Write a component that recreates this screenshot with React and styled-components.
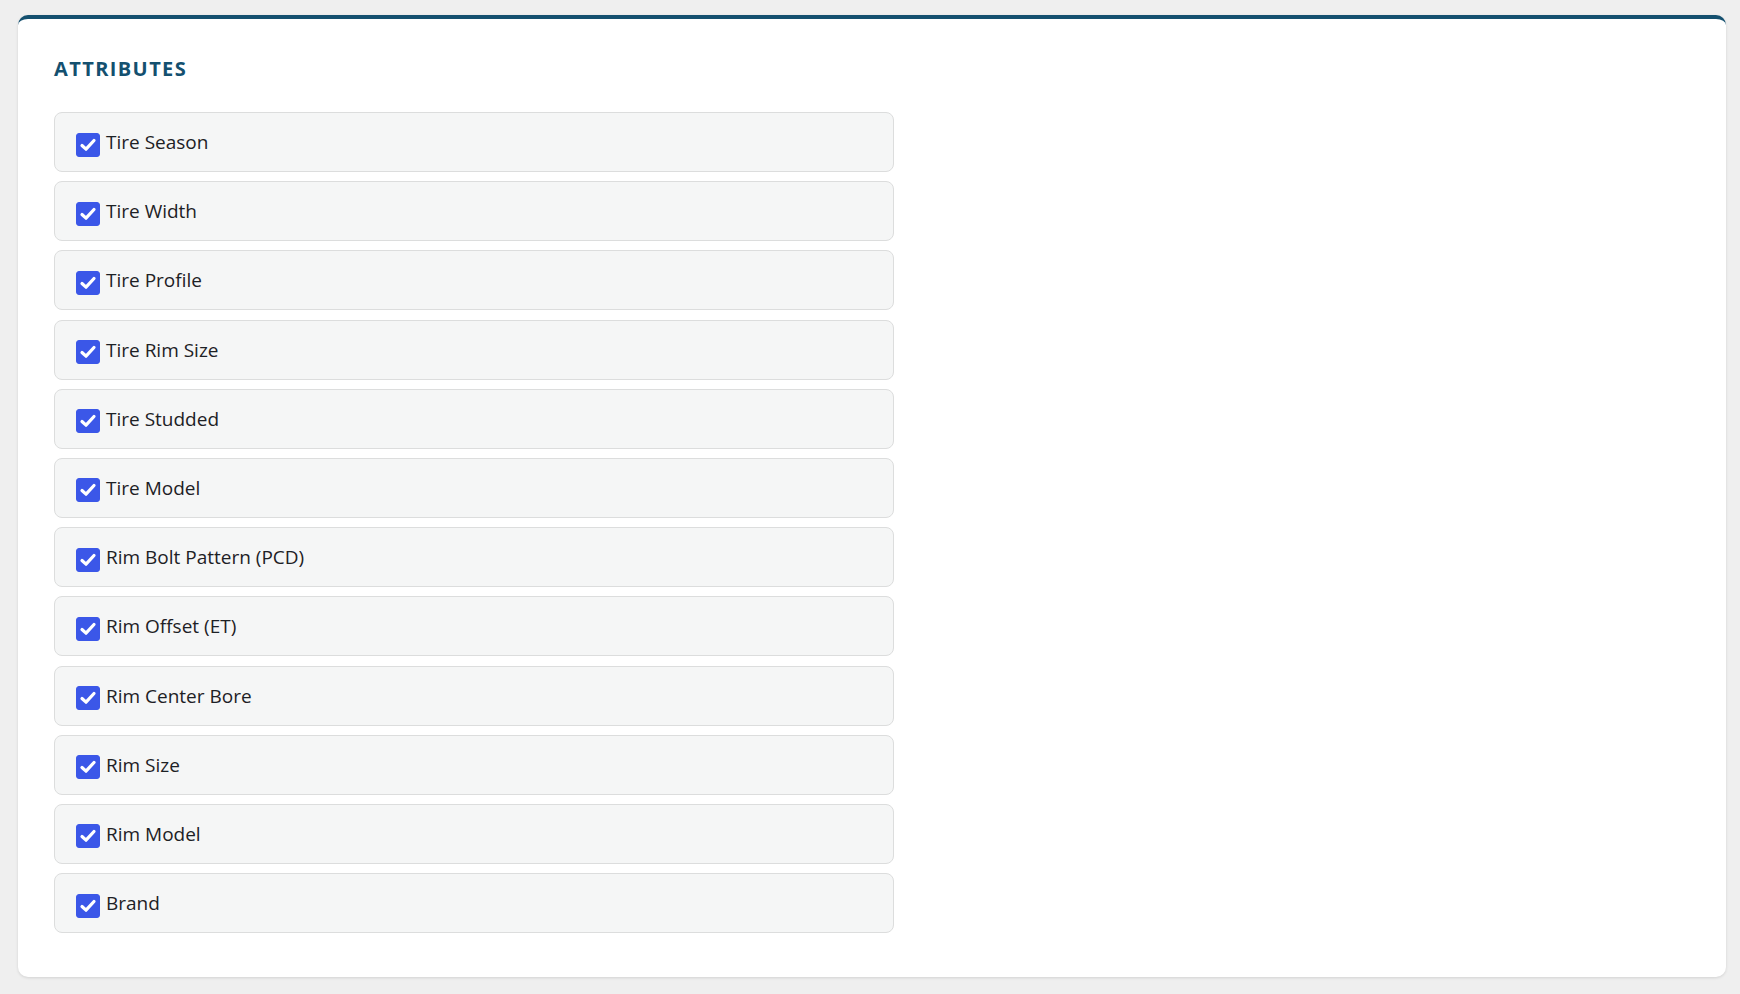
import React, { useState } from "react";
import styled, { createGlobalStyle } from "styled-components";

const GlobalStyle = createGlobalStyle`
  html, body { margin: 0; padding: 0; background: #efefef; }
  body {
    font-family: "Open Sans", "Noto Sans", "Liberation Sans", sans-serif;
    color: #212529;
    padding: 15px 14px 16px 18px;
  }
  * { box-sizing: border-box; }
`;

const Card = styled.section`
  background: #ffffff;
  border-top: 4px solid #14506f;
  border-radius: 10px;
  box-shadow: 0 1px 3px rgba(0, 0, 0, 0.12);
  padding: 38px 36px 34px 36px;
`;

const Heading = styled.h2`
  margin: 0 0 31px 0;
  font-size: 20px;
  line-height: 24px;
  font-weight: 700;
  letter-spacing: 1.4px;
  color: #14506f;
  text-transform: uppercase;
`;

const List = styled.div`
  display: flex;
  flex-direction: column;
  gap: 9.2px;
  width: 840px;
  padding-bottom: 10px;
`;

const Row = styled.label`
  display: flex;
  align-items: center;
  gap: 6px;
  height: 60px;
  padding: 0 21px;
  background: #f5f6f6;
  border: 1px solid #dcdddd;
  border-radius: 8px;
  cursor: pointer;
`;

const Box = styled.span`
  width: 24px;
  height: 24px;
  flex: none;
  margin-top: 5px;
  border-radius: 3px;
  background: ${(p) => (p.$checked ? "#3b57e8" : "#ffffff")};
  border: 1px solid ${(p) => (p.$checked ? "#3b57e8" : "#9aa0a6")};
  display: flex;
  align-items: center;
  justify-content: center;
`;

const Label = styled.span`
  font-size: 19px;
  line-height: 24px;
  font-weight: 500;
  color: #1d2125;
`;

const items = [
  "Tire Season",
  "Tire Width",
  "Tire Profile",
  "Tire Rim Size",
  "Tire Studded",
  "Tire Model",
  "Rim Bolt Pattern (PCD)",
  "Rim Offset (ET)",
  "Rim Center Bore",
  "Rim Size",
  "Rim Model",
  "Brand",
];

function Item({ text }) {
  const [checked, setChecked] = useState(true);
  return (
    <Row onClick={() => setChecked((c) => !c)}>
      <Box $checked={checked}>
        {checked && (
          <svg width="22" height="22" viewBox="0 0 22 22">
            <path
              d="M5 11.5 L9 15.2 L17 6.5"
              fill="none"
              stroke="#fff"
              strokeWidth="3.2"
              strokeLinecap="round"
              strokeLinejoin="round"
            />
          </svg>
        )}
      </Box>
      <Label>{text}</Label>
    </Row>
  );
}

export default function App() {
  return (
    <>
      <GlobalStyle />
      <Card>
        <Heading>Attributes</Heading>
        <List>
          {items.map((t) => (
            <Item key={t} text={t} />
          ))}
        </List>
      </Card>
    </>
  );
}
